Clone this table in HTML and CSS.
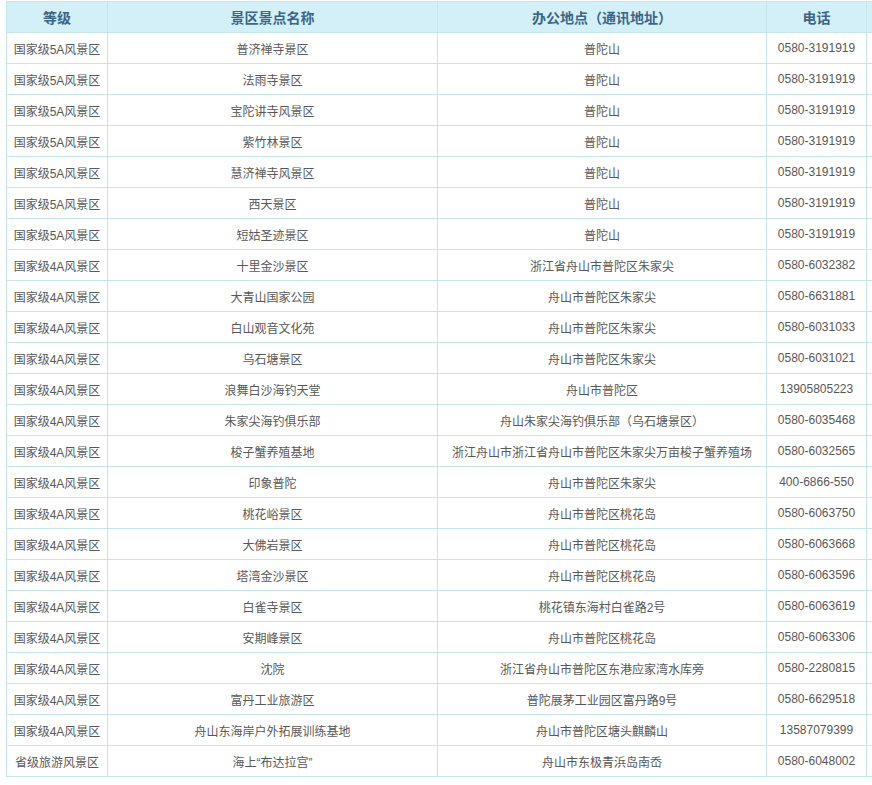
FILE: index.html
```html
<!DOCTYPE html>
<html lang="zh-CN">
<head>
<meta charset="utf-8">
<title>景区景点</title>
<link rel="stylesheet" href="styles.css">
</head>
<body>
<div class="wrap">
<table class="tbl">
<colgroup>
<col class="c1"><col class="c2"><col class="c3"><col class="c4"><col class="c5">
</colgroup>
<thead>
<tr><th>等级</th><th>景区景点名称</th><th>办公地点（通讯地址）</th><th>电话</th><th></th></tr>
</thead>
<tbody>
<tr><td>国家级5A风景区</td><td>普济禅寺景区</td><td>普陀山</td><td>0580-3191919</td><td></td></tr>
<tr><td>国家级5A风景区</td><td>法雨寺景区</td><td>普陀山</td><td>0580-3191919</td><td></td></tr>
<tr><td>国家级5A风景区</td><td>宝陀讲寺风景区</td><td>普陀山</td><td>0580-3191919</td><td></td></tr>
<tr><td>国家级5A风景区</td><td>紫竹林景区</td><td>普陀山</td><td>0580-3191919</td><td></td></tr>
<tr><td>国家级5A风景区</td><td>慧济禅寺风景区</td><td>普陀山</td><td>0580-3191919</td><td></td></tr>
<tr><td>国家级5A风景区</td><td>西天景区</td><td>普陀山</td><td>0580-3191919</td><td></td></tr>
<tr><td>国家级5A风景区</td><td>短姑圣迹景区</td><td>普陀山</td><td>0580-3191919</td><td></td></tr>
<tr><td>国家级4A风景区</td><td>十里金沙景区</td><td>浙江省舟山市普陀区朱家尖</td><td>0580-6032382</td><td></td></tr>
<tr><td>国家级4A风景区</td><td>大青山国家公园</td><td>舟山市普陀区朱家尖</td><td>0580-6631881</td><td></td></tr>
<tr><td>国家级4A风景区</td><td>白山观音文化苑</td><td>舟山市普陀区朱家尖</td><td>0580-6031033</td><td></td></tr>
<tr><td>国家级4A风景区</td><td>乌石塘景区</td><td>舟山市普陀区朱家尖</td><td>0580-6031021</td><td></td></tr>
<tr><td>国家级4A风景区</td><td>浪舞白沙海钓天堂</td><td>舟山市普陀区</td><td>13905805223</td><td></td></tr>
<tr><td>国家级4A风景区</td><td>朱家尖海钓俱乐部</td><td>舟山朱家尖海钓俱乐部（乌石塘景区）</td><td>0580-6035468</td><td></td></tr>
<tr><td>国家级4A风景区</td><td>梭子蟹养殖基地</td><td>浙江舟山市浙江省舟山市普陀区朱家尖万亩梭子蟹养殖场</td><td>0580-6032565</td><td></td></tr>
<tr><td>国家级4A风景区</td><td>印象普陀</td><td>舟山市普陀区朱家尖</td><td>400-6866-550</td><td></td></tr>
<tr><td>国家级4A风景区</td><td>桃花峪景区</td><td>舟山市普陀区桃花岛</td><td>0580-6063750</td><td></td></tr>
<tr><td>国家级4A风景区</td><td>大佛岩景区</td><td>舟山市普陀区桃花岛</td><td>0580-6063668</td><td></td></tr>
<tr><td>国家级4A风景区</td><td>塔湾金沙景区</td><td>舟山市普陀区桃花岛</td><td>0580-6063596</td><td></td></tr>
<tr><td>国家级4A风景区</td><td>白雀寺景区</td><td>桃花镇东海村白雀路2号</td><td>0580-6063619</td><td></td></tr>
<tr><td>国家级4A风景区</td><td>安期峰景区</td><td>舟山市普陀区桃花岛</td><td>0580-6063306</td><td></td></tr>
<tr><td>国家级4A风景区</td><td>沈院</td><td>浙江省舟山市普陀区东港应家湾水库旁</td><td>0580-2280815</td><td></td></tr>
<tr><td>国家级4A风景区</td><td>富丹工业旅游区</td><td>普陀展茅工业园区富丹路9号</td><td>0580-6629518</td><td></td></tr>
<tr><td>国家级4A风景区</td><td>舟山东海岸户外拓展训练基地</td><td>舟山市普陀区塘头麒麟山</td><td>13587079399</td><td></td></tr>
<tr><td>省级旅游风景区</td><td>海上“布达拉宫”</td><td>舟山市东极青浜岛南岙</td><td>0580-6048002</td><td></td></tr>
</tbody>
</table>
</div>
</body>
</html>
```

FILE: styles.css
```css
html, body {
  margin: 0;
  padding: 0;
  background: #ffffff;
  overflow: hidden;
}

.wrap {
  padding: 1px 0 0 6px;
  width: 866px;
  overflow: hidden;
}

.tbl {
  border-collapse: collapse;
  table-layout: fixed;
  width: 1000px;
  font-family: "Liberation Sans", "Noto Sans CJK SC", sans-serif;
  font-size: 12px;
  color: #585858;
}

.c1 { width: 101px; }
.c2 { width: 330px; }
.c3 { width: 329px; }
.c4 { width: 100px; }
.c5 { width: 140px; }

.tbl th,
.tbl td {
  border: 1px solid #c6e5ea;
  text-align: center;
  padding: 0 4px;
  white-space: nowrap;
  overflow: hidden;
}

.tbl th {
  height: 30px;
  background: #d3f0f9;
  color: #3c6585;
  font-size: 14px;
  font-weight: bold;
}

.tbl td {
  height: 30px;
}
```
